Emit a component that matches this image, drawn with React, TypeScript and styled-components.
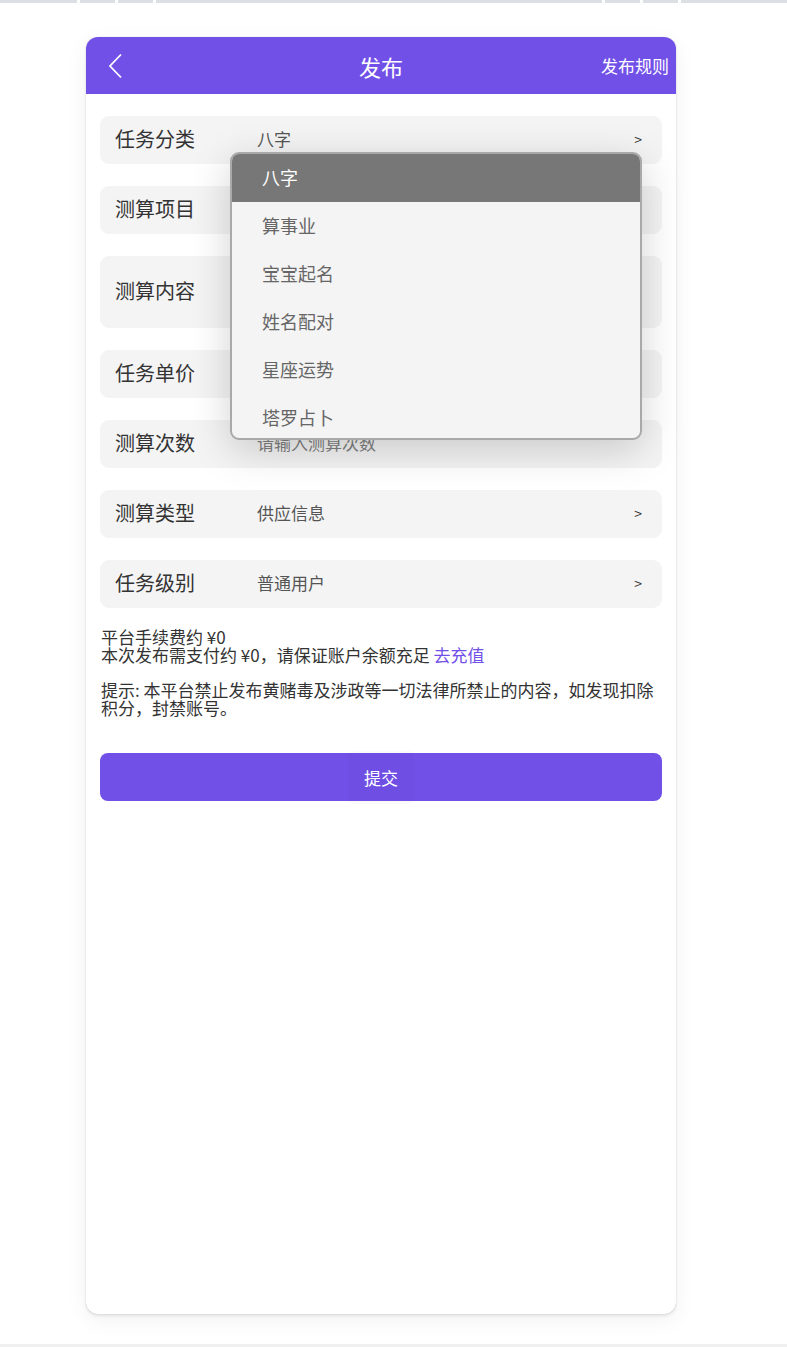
import React from "react";
import styled, { createGlobalStyle } from "styled-components";

const purple = "#7150e8";
const font = `"Noto Sans CJK SC", "Noto Sans", "Liberation Sans", sans-serif`;

const GlobalStyle = createGlobalStyle`
  html, body {
    margin: 0;
    padding: 0;
    background: #ffffff;
    font-family: ${font};
  }
  * {
    box-sizing: border-box;
  }
`;

const fields = [
  { label: "任务分类", value: "八字", arrow: true },
  { label: "测算项目", value: "", arrow: true },
  { label: "测算内容", value: "", tall: true },
  { label: "任务单价", value: "" },
  { label: "测算次数", value: "请输入测算次数", placeholder: true },
  { label: "测算类型", value: "供应信息", arrow: true },
  { label: "任务级别", value: "普通用户", arrow: true },
];

const options = ["八字", "算事业", "宝宝起名", "姓名配对", "星座运势", "塔罗占卜"];

const App = () => {
  return (
    <Page>
      <GlobalStyle />
      <TopBar>
        <Tick />
        <Tick />
        <Tick />
        <Spacer />
        <Tick />
        <Tick />
        <Tick />
      </TopBar>
      <Main>
        <Card>
          <Header>
            <Back>
              <svg width="16" height="26" viewBox="0 0 16 26" fill="none">
                <path d="M13 1.5L2 13l11 11.5" stroke="#fff" strokeWidth="1.8" />
              </svg>
            </Back>
            <Title>发布</Title>
            <Rules>发布规则</Rules>
          </Header>
          <Body>
            <Fields>
              {fields.map((f) => (
                <Row key={f.label} $tall={f.tall}>
                  <Label>{f.label}</Label>
                  <Value $placeholder={f.placeholder}>{f.value}</Value>
                  {f.arrow && <Arrow>&gt;</Arrow>}
                </Row>
              ))}
            </Fields>
            <Notes>
              <p>
                平台手续费约 ¥0
                <br />
                本次发布需支付约 ¥0，请保证账户余额充足 <Link>去充值</Link>
              </p>
              <p>提示: 本平台禁止发布黄赌毒及涉政等一切法律所禁止的内容，如发现扣除积分，封禁账号。</p>
            </Notes>
            <Submit>
              <span>提交</span>
            </Submit>
          </Body>
          <Dropdown>
            {options.map((o, i) => (
              <Option key={o} $active={i === 0}>
                {o}
              </Option>
            ))}
          </Dropdown>
        </Card>
      </Main>
      <BottomLine />
    </Page>
  );
};

export default App;

const Page = styled.div`
  min-height: 100vh;
  display: flex;
  flex-direction: column;
`;

const TopBar = styled.div`
  height: 3px;
  background: #dcdfe4;
  display: flex;
  padding: 0 106px 0 77px;
  gap: 35px;
`;

const Tick = styled.div`
  width: 3px;
  height: 3px;
  background: #ffffff;
`;

const Spacer = styled.div`
  flex: 1;
`;

const Main = styled.div`
  flex: 1;
  padding: 34px 0 0 86px;
`;

const Card = styled.div`
  position: relative;
  width: 590px;
  height: 1277px;
  background: #ffffff;
  border-radius: 12px;
  box-shadow: 0 0 1px rgba(0, 0, 0, 0.25), 0 2px 3px rgba(0, 0, 0, 0.08), 0 6px 22px rgba(0, 0, 0, 0.06);
`;

const Header = styled.div`
  height: 57px;
  background: ${purple};
  border-radius: 12px 12px 0 0;
  display: flex;
  align-items: center;
  justify-content: space-between;
  padding: 0 7px 0 22px;
  position: relative;
  color: #ffffff;
`;

const Back = styled.div`
  display: flex;
  align-items: center;
  width: 16px;
`;

const Title = styled.div`
  position: absolute;
  left: 0;
  right: 0;
  text-align: center;
  font-size: 22px;
  pointer-events: none;
`;

const Rules = styled.div`
  font-size: 17px;
`;

const Body = styled.div`
  padding: 22px 14px 0;
`;

const Fields = styled.div`
  display: flex;
  flex-direction: column;
  gap: 22px;
`;

const Row = styled.div<{ $tall?: boolean }>`
  height: ${(p) => (p.$tall ? 72 : 48)}px;
  background: #f4f4f4;
  border-radius: 9px;
  display: flex;
  align-items: center;
  padding: 0 20px 3px 15px;
`;

const Label = styled.div`
  width: 142px;
  font-size: 20px;
  color: #333333;
`;

const Value = styled.div<{ $placeholder?: boolean }>`
  flex: 1;
  font-size: 17px;
  color: ${(p) => (p.$placeholder ? "#808080" : "#555555")};
`;

const Arrow = styled.div`
  font-size: 14px;
  color: #333333;
`;

const Notes = styled.div`
  margin-top: 20px;
  font-size: 17px;
  line-height: 18px;
  color: #333333;
  padding-left: 1px;
  p {
    margin: 0 0 17px;
  }
`;

const Link = styled.span`
  color: ${purple};
`;

const Submit = styled.button`
  width: 100%;
  height: 48px;
  margin-top: 36px;
  border: 0;
  border-radius: 8px;
  background: ${purple};
  color: #ffffff;
  font-family: ${font};
  font-size: 17px;
  display: flex;
  align-items: center;
  justify-content: center;
  span {
    padding: 14px 16px;
    border-radius: 4px;
    background: rgba(0, 0, 0, 0.015);
  }
`;

const Dropdown = styled.div`
  position: absolute;
  left: 144px;
  top: 115px;
  width: 412px;
  height: 288px;
  background: #f4f4f4;
  border: 2px solid #a9a9a9;
  border-radius: 9px;
  overflow: hidden;
  box-shadow: 0 10px 40px rgba(0, 0, 0, 0.18);
`;

const Option = styled.div<{ $active?: boolean }>`
  height: 48px;
  display: flex;
  align-items: center;
  padding: 0 0 2px 30px;
  font-size: 18px;
  color: ${(p) => (p.$active ? "#ffffff" : "#666666")};
  background: ${(p) => (p.$active ? "#777777" : "transparent")};
`;

const BottomLine = styled.div`
  height: 3px;
  background: #f0f0f0;
`;
